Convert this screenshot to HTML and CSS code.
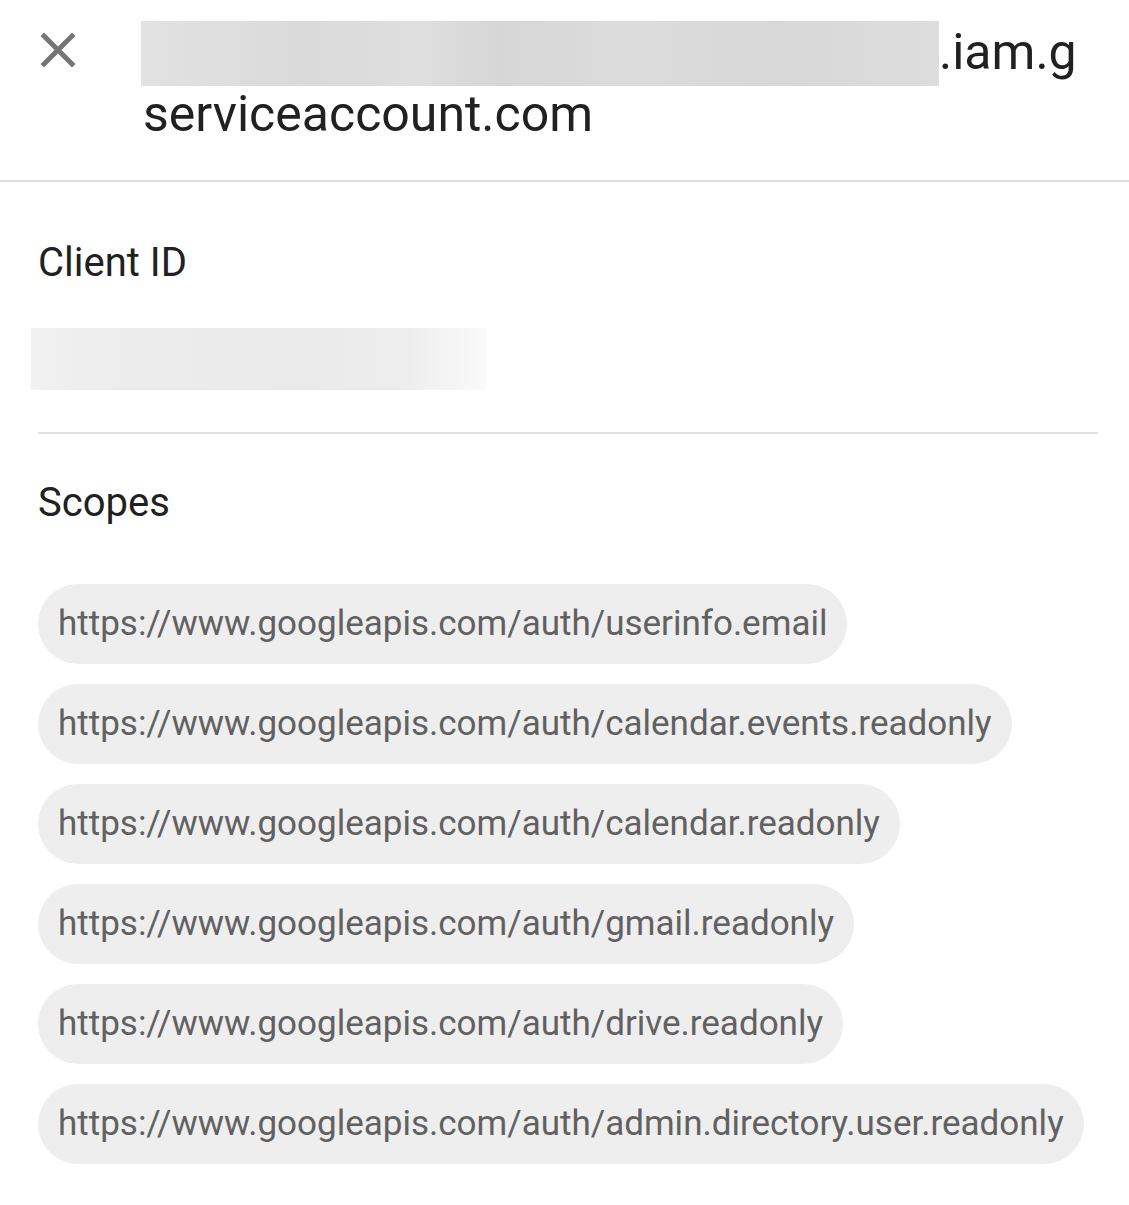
FILE: index.html
```html
<!DOCTYPE html>
<html lang="en">
<head>
<meta charset="utf-8">
<title>Service account</title>
<link rel="stylesheet" href="styles.css">
</head>
<body>
<div class="panel">
  <header class="header">
    <button class="close" aria-label="Close">
      <svg viewBox="0 0 24 24" width="60" height="60"><path d="M19 6.41L17.59 5 12 10.59 6.41 5 5 6.41 10.59 12 5 17.59 6.41 19 12 13.41 17.59 19 19 17.59 13.41 12z" fill="#757575"/></svg>
    </button>
    <h1 class="title"><span class="redacted redacted-title"></span>.iam.gserviceaccount.com</h1>
  </header>
  <main class="content">
    <section class="section section-client">
      <h2 class="section-title">Client ID</h2>
      <div class="redacted redacted-id"></div>
    </section>
    <section class="section section-scopes">
      <h2 class="section-title">Scopes</h2>
      <ul class="chips">
        <li class="chip">https://www.googleapis.com/auth/userinfo.email</li>
        <li class="chip">https://www.googleapis.com/auth/calendar.events.readonly</li>
        <li class="chip">https://www.googleapis.com/auth/calendar.readonly</li>
        <li class="chip">https://www.googleapis.com/auth/gmail.readonly</li>
        <li class="chip">https://www.googleapis.com/auth/drive.readonly</li>
        <li class="chip">https://www.googleapis.com/auth/admin.directory.user.readonly</li>
      </ul>
    </section>
  </main>
</div>
</body>
</html>
```

FILE: styles.css
```css
* { box-sizing: border-box; }
html, body {
  margin: 0;
  padding: 0;
  background: #ffffff;
}
body {
  font-family: Roboto, "Noto Sans", Arial, sans-serif;
  color: #212121;
}
.panel {
  width: 1129px;
}
.header {
  display: flex;
  align-items: flex-start;
  height: 182px;
  padding: 19px 44px 0 28px;
  border-bottom: 2px solid #e0e0e0;
}
.close {
  flex: none;
  width: 60px;
  height: 60px;
  padding: 0;
  margin: 1px 53px 0 0;
  border: 0;
  background: transparent;
  display: flex;
}
.title {
  margin: 0;
  padding: 2px 0 0 2px;
  font-size: 50px;
  font-weight: 400;
  line-height: 57px;
  word-break: break-all;
  flex: 1;
}
.redacted-title {
  display: inline-block;
  width: 798px;
  height: 65px;
  margin-left: -2px;
  vertical-align: -17px;
  background: linear-gradient(90deg, #e2e2e2 0%, #dadada 20%, #dedede 35%, #d6d6d6 45%, #dcdcdc 60%, #d8d8d8 80%, #dddddd 100%);
}
.content {
  padding: 0 31px 40px 38px;
}
.section-title {
  margin: 0;
  font-size: 40px;
  font-weight: 400;
  line-height: 48px;
  color: #212121;
}
.section-client {
  padding-top: 57px;
  padding-bottom: 42px;
  border-bottom: 2px solid #e0e0e0;
}
.redacted-id {
  margin: 41px 0 0 -7px;
  width: 455px;
  height: 62px;
  background: linear-gradient(90deg, #f1f1f1 0%, #ececec 20%, #eaeaea 60%, #ededed 82%, #fafafa 100%);
}
.section-scopes {
  padding-top: 45px;
}
.chips {
  list-style: none;
  margin: 57px 0 0;
  padding: 0;
  display: flex;
  flex-direction: column;
  align-items: flex-start;
  gap: 20px;
}
.chip {
  height: 80px;
  padding: 0 20px;
  border-radius: 40px;
  background: #eeeeee;
  color: #616161;
  font-size: 35px;
  line-height: 80px;
  white-space: nowrap;
}
```
